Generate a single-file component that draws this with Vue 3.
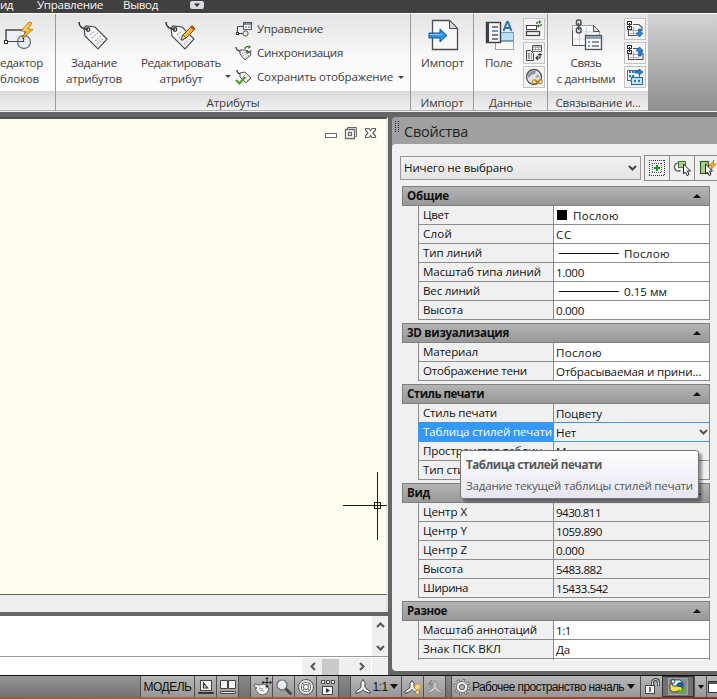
<script setup>
// Spreads a label over a given width by adjusting its letter spacing.
const vFit = {
  mounted(el, { value }) {
    if (!value) return
    const natural = el.getBoundingClientRect().width
    el.style.letterSpacing = (value - natural) / el.textContent.length + 'px'
  },
}

const sections = [
  {
    title: 'Общие', w: 42,
    rows: [
      { label: 'Цвет', lw: 26, value: 'Послою', vw: 46, swatch: true },
      { label: 'Слой', lw: 29, value: 'СС', vw: 16 },
      { label: 'Тип линий', lw: 59, value: 'Послою', vw: 46, line: true },
      { label: 'Масштаб типа линий', lw: 118, value: '1.000', vw: 28 },
      { label: 'Вес линий', lw: 57, value: '0.15 мм', vw: 43, line: true },
      { label: 'Высота', lw: 40, value: '0.000', vw: 28 },
    ],
  },
  {
    title: '3D визуализация', w: 102,
    rows: [
      { label: 'Материал', lw: 55, value: 'Послою', vw: 46 },
      { label: 'Отображение тени', lw: 104, value: 'Отбрасываемая и прини...', vw: 145 },
    ],
  },
  {
    title: 'Стиль печати', w: 77, muted: true,
    rows: [
      { label: 'Стиль печати', lw: 74, value: 'Поцвету', vw: 46 },
      { label: 'Таблица стилей печати', lw: 129, value: 'Нет', vw: 20, selected: true },
      { label: 'Пространство таблиц...', lw: 128, value: 'Модель', vw: 44 },
      { label: 'Тип стилей печати', lw: 104, value: '', vw: 0 },
    ],
  },
  {
    title: 'Вид', w: 23, muted: true,
    rows: [
      { label: 'Центр X', lw: 44, value: '9430.811', vw: 45 },
      { label: 'Центр Y', lw: 44, value: '1059.890', vw: 46 },
      { label: 'Центр Z', lw: 44, value: '0.000', vw: 28 },
      { label: 'Высота', lw: 40, value: '5483.882', vw: 46 },
      { label: 'Ширина', lw: 45, value: '15433.542', vw: 52 },
    ],
  },
  {
    title: 'Разное', w: 40,
    rows: [
      { label: 'Масштаб аннотаций', lw: 114, value: '1:1', vw: 15 },
      { label: 'Знак ПСК ВКЛ', lw: 78, value: 'Да', vw: 14 },
      { label: '', lw: 0, value: '', vw: 0 },
    ],
  },
]
</script>

<template>
  <div class="app">
    <nav class="menu">
      <span v-fit="13" class="m1">ид</span>
      <span v-fit="66" class="m2">Управление</span>
      <span v-fit="35" class="m3">Вывод</span>
      <svg class="m4" width="14" height="8" viewBox="0 0 14 8"><rect width="14" height="8" rx="2" fill="#d9d9de" /><path d="M4 2.500h6L7 6z" fill="#333" /></svg>
    </nav>

    <div class="ribbon">
      <section class="panel p-blocks">
        <div class="body">
          <div class="big editor">
            <svg width="34" height="32" viewBox="0 0 34 32">
              <path d="M6 22V11h19v10" fill="#edf1f6" stroke="#45484c" stroke-width="1.4" />
              <circle cx="24" cy="23" r="6.5" fill="#e4ebf3" fill-opacity=".85" stroke="#6b7178" stroke-width="1.3" />
              <path d="M6 22.500h17M23.500 23v-7" stroke="#45484c" stroke-width="1.2" />
              <rect x="4.500" y="21.500" width="3" height="3" fill="#fff" stroke="#333" />
              <path d="M29 3l-8 9 5 .5-4 7 11-9-5-.5 4-6z" fill="#ffb52d" stroke="#b8741a" stroke-width=".8" />
              <path d="M28 6l-4 5 4 .5" fill="none" stroke="#ffec9b" />
            </svg>
            <span v-fit="43">едактор</span>
            <span v-fit="39" class="l2">блоков</span>
          </div>
        </div>
        <div class="caption"></div>
      </section>

      <section class="panel p-attr">
        <div class="body">
          <div class="big define">
            <svg width="34" height="32" viewBox="0 0 34 32">
              <path d="M7 9l1 8 13 13 9-10L18 8 9 7z" fill="#f5f6f8" stroke="#4b4e53" stroke-width="1.2" />
              <path d="M13 16l5-4M15 19l6-5M18 22l6-5M20 25l6-5" stroke="#a4a8ad" stroke-width="1.1" stroke-dasharray="2 1" />
              <circle cx="11" cy="10.500" r="1.800" fill="#ddd" stroke="#333" stroke-width="1.2" />
              <path d="M2 3c0 5 4 7 9 7.500" fill="none" stroke="#333" stroke-width="1.5" />
            </svg>
            <span v-fit="46">Задание</span>
            <span v-fit="56" class="l2">атрибутов</span>
          </div>
          <div class="big edit">
            <svg width="34" height="32" viewBox="0 0 34 32">
              <path d="M7 9l1 8 13 13 9-10L18 8 9 7z" fill="#f5f6f8" stroke="#4b4e53" stroke-width="1.2" />
              <path d="M13 16l5-4M15 19l6-5M18 22l6-5M20 25l6-5" stroke="#a4a8ad" stroke-width="1.1" stroke-dasharray="2 1" />
              <circle cx="11" cy="10.500" r="1.800" fill="#ddd" stroke="#333" stroke-width="1.2" />
              <path d="M2 3c0 5 4 7 9 7.500" fill="none" stroke="#333" stroke-width="1.5" />
              <path d="M17 21l2-5L28 7l3 3-9 9z" fill="#ffb43a" stroke="#8a4d18" />
              <path d="M26 8l2-2 3 3-2 2z" fill="#b64e25" /><path d="M17 21l2-5 3 3z" fill="#f3ddb7" stroke="#444" stroke-width=".8" />
            </svg>
            <span v-fit="80">Редактировать</span>
            <span v-fit="43" class="l2">атрибут</span>
          </div>
          <i class="caret edit-caret"></i>
          <ul class="cmds">
            <li>
              <svg width="18" height="18" viewBox="0 0 18 18"><path d="M2.500 13V6.500h6M3 13.500h6" fill="none" stroke="#444" /><rect x="1.500" y="12.500" width="2" height="2" fill="#fff" stroke="#333" /><circle cx="10.500" cy="13.500" r="2.600" fill="#e5e8ec" stroke="#555" /><rect x="8.500" y="2.500" width="8" height="7" fill="#f4f6f8" stroke="#4e5761" /><path d="M9 4h7" stroke="#7b8da1" stroke-width="2" /><path d="M10 7h2m1 0h3" stroke="#666" /></svg>
              <span v-fit="66">Управление</span>
            </li>
            <li>
              <svg width="18" height="18" viewBox="0 0 18 18"><path d="M1 3c0 3 3 4 5 4" fill="none" stroke="#333" stroke-width="1.300" /><path d="M5 6v4l5 6 6-5-1-3-5-2z" fill="#f2f3f5" stroke="#555" /><path d="M7 10l5-3m-4 5l5-3m-3 5l4-3" stroke="#888" stroke-dasharray="1 1" /><path d="M10 5c0-2 2-3 4-2m2 3c0 3-2 3-4 2" fill="none" stroke="#3c7a24" stroke-width="1.200" /><path d="M13.500 1l2.500 2-2.500 2zM13 6v4l-2.500-2z" fill="#3c7a24" /></svg>
              <span v-fit="86">Синхронизация</span>
            </li>
            <li class="keep">
              <svg width="18" height="18" viewBox="0 0 18 18"><path d="M2 2c0 3 2 4 5 4" fill="none" stroke="#333" stroke-width="1.300" /><path d="M5 5v4l6 6 5-5-6-6z" fill="#f2f3f5" stroke="#555" /><path d="M8 9l3-3m-1 5l3-3m-1 5l3-3" stroke="#777" stroke-dasharray="1 1" /><path d="M1 12l3.500 3.500L10 9" fill="none" stroke="#4b9e25" stroke-width="2.200" /></svg>
              <span v-fit="136">Сохранить отображение</span><i class="caret"></i>
            </li>
          </ul>
        </div>
        <div class="caption"><span v-fit="53">Атрибуты</span></div>
      </section>

      <section class="panel p-import">
        <div class="body">
          <div class="big">
            <svg width="34" height="32" viewBox="0 0 34 32">
              <path d="M6.500 1.500h17l8 8v21h-25z" fill="#f7f8f9" stroke="#4a4d52" stroke-width="1.300" /><path d="M23.500 1.500v8h8z" fill="#d6dade" stroke="#4a4d52" />
              <path d="M3 14h11v-4l7 6.500-7 6.500v-4H3z" fill="#2d94ea" stroke="#1c5587" /><path d="M4 15.500h12" stroke="#8ccbff" />
            </svg>
            <span v-fit="43">Импорт</span>
          </div>
        </div>
        <div class="caption"><span v-fit="43">Импорт</span></div>
      </section>

      <section class="panel p-data">
        <div class="body">
          <div class="big field">
            <svg width="34" height="32" viewBox="0 0 34 32">
              <rect x="13.500" y="22.500" width="18" height="8" fill="#fafafa" stroke="#9a9fa5" /><rect x="16.500" y="13.500" width="15" height="8" fill="#b9e0f6" stroke="#6d9dba" />
              <rect x="4.500" y="3.500" width="14" height="20" fill="#f4f5f6" stroke="#3a3d42" stroke-width="1.400" /><rect x="4" y="3" width="3" height="21" fill="#3c4046" />
              <path d="M10 8h6M10 16h6M10 20h6" stroke="#555" stroke-width="1.500" /><path d="M10 12h6" stroke="#347fb8" stroke-width="1.500" />
              <path d="M21.500 12l3.500-9h1l3.500 9M22.500 9h6" fill="none" stroke="#2e74ad" stroke-width="2" />
            </svg>
            <span v-fit="27">Поле</span>
          </div>
          <div class="minis">
            <b><svg width="20" height="20" viewBox="0 0 20 20"><rect x="2.500" y="6.500" width="10" height="4" fill="#fff" stroke="#444" /><rect x="2.500" y="12.500" width="13" height="4" fill="#f5f5f5" stroke="#444" stroke-width="1.300" /><path d="M12.500 5c0-2 1.500-2 3-2m2 2c0 2-2 2-3 2" fill="none" stroke="#397c25" stroke-width="1.200" /><path d="M15 1l2.500 2L15 5zM15 5v4l-2.500-2z" fill="#397c25" /></svg></b>
            <b><svg width="20" height="20" viewBox="0 0 20 20"><path d="M8.500 2.500h9v6h-9z" fill="#fff" stroke="#555" /><path d="M8 4h10" stroke="#777" /><path d="M11.500 4v5M14.500 4v5M9 6.500h8" stroke="#aaa" /><path d="M2.500 7.500h4l3 3v7h-7z" fill="#ececec" stroke="#444" /><path d="M4 11h4M4 13h4M4 15h4" stroke="#555" stroke-width="1.200" stroke-dasharray="2 1" /><path d="M16 11v4h-4m2-2l-2 2 2 2M14 12l2-1 2 1" fill="none" stroke="#333" stroke-width="1.200" /></svg></b>
            <b><svg width="20" height="20" viewBox="0 0 20 20"><circle cx="10" cy="10" r="7.500" fill="#e2e6ea" stroke="#555" stroke-width="1.300" /><path d="M4 7c2-3 6-4 8-3l-1 3-4 1-2 3-1-1z" fill="#8e979f" /><path d="M11 10l3-3 2 3-3 1z" fill="#a5adb5" /><rect x="8.500" y="13" width="4" height="3.500" rx="1.500" fill="#fff" stroke="#c78722" stroke-width="1.300" /><rect x="14" y="13" width="4" height="3.500" rx="1.500" fill="#fff" stroke="#c78722" stroke-width="1.300" /><path d="M11 14.800h5" stroke="#a8640c" /></svg></b>
          </div>
        </div>
        <div class="caption"><span v-fit="43">Данные</span></div>
      </section>

      <section class="panel p-link">
        <div class="body">
          <div class="big link">
            <svg width="34" height="32" viewBox="0 0 34 32">
              <path d="M3.500 6.500h21l6 6v14h-27z" fill="#f8f9fa" stroke="#9ca1a7" /><path d="M3 13h27M3 20h27M10.500 8v18M17.500 8v18" stroke="#d0d4d8" /><path d="M24.500 6.500v6h6z" fill="#ddd" stroke="#555" /><path d="M3.500 12v14.500h13" fill="none" stroke="#555" />
              <rect x="7.500" y="1" width="4.500" height="5.500" rx="2" fill="none" stroke="#4b5057" stroke-width="1.500" /><rect x="7.500" y="8.500" width="4.500" height="5.500" rx="2" fill="none" stroke="#4b5057" stroke-width="1.500" /><path d="M9.700 4v7" stroke="#4b5057" stroke-width="1.500" />
              <rect x="16.500" y="16.500" width="16" height="14" fill="#f3f5f7" stroke="#4c545d" stroke-width="1.300" /><path d="M17 18.500h15" stroke="#7e93a8" stroke-width="2.500" /><path d="M19 23h2m2 0h7M19 27h2m2 0h7" stroke="#667989" stroke-width="1.300" />
            </svg>
            <span v-fit="31">Связь</span>
            <span v-fit="59" class="l2">с данными</span>
          </div>
          <div class="minis">
            <b v-for="k in 2" :key="k"><svg width="20" height="20" viewBox="0 0 20 20"><path d="M3.500 10v6.500h9M8 5.500h6l3 3V12" fill="#fff" stroke="#555" stroke-width="1.200" /><path d="M5 11.500h10M5 14.500h9M8.500 8v8" stroke="#a5abb1" /><rect x="2.500" y="2.500" width="4" height="3" fill="none" stroke="#333" /><rect x="2.500" y="7.500" width="4" height="3" fill="none" stroke="#333" /><path d="M4.500 4v5" stroke="#333" /><path v-if="k === 1" d="M13.500 10h2.500v4h2l-3.500 4L11 14h2.500z" fill="#2385e2" stroke="#14599f" stroke-width=".8" /><path v-else d="M13.500 13H16V8h2l-3.500-4L11 8h2.500z" fill="#2385e2" stroke="#14599f" stroke-width=".8" /><path v-if="k === 2" d="M12 16.500h6V10" fill="none" stroke="#444" /></svg></b>
            <b><svg width="20" height="20" viewBox="0 0 20 20"><rect x="2.500" y="3.500" width="12" height="10" fill="#f1f6fa" stroke="#50708c" /><path d="M4 5h5M4 9h2m1 0h2" stroke="#2279c9" stroke-width="2" stroke-dasharray="2 1" /><path d="M10 4h4V2l4 3-4 3V6h-4z" fill="#2385e2" stroke="#14599f" stroke-width=".8" /><rect x="6.500" y="10.500" width="11" height="7" fill="#d8ecfb" stroke="#2a6da9" stroke-width="1.200" /><path d="M9 14h2m2 0h2" stroke="#2279c9" stroke-width="2.500" /></svg></b>
          </div>
        </div>
        <div class="caption"><span v-fit="85">Связывание и...</span></div>
      </section>
      <div class="rest"></div>
    </div>

    <main class="work">
      <div class="left">
        <div class="canvas">
          <svg class="winbtns" width="54" height="14" viewBox="0 0 54 14">
            <rect x="1.500" y="7.500" width="11" height="4" fill="#fff" stroke="#6b6b6b" />
            <path d="M23.500 1.500h9v9h-9z" fill="#eee" stroke="#6b6b6b" /><path d="M21.500 3.500h9v9h-9z" fill="#fff" stroke="#6b6b6b" stroke-width="1.300" /><rect x="24.500" y="6.500" width="3" height="3" fill="#fff" stroke="#6b6b6b" stroke-width="1.300" />
            <path d="M41.500 2.500h3.500l1.500 2 1.500-2h3.500v1.500l-2.500 3 2.500 3v1.500H48l-1.500-2-1.500 2h-3.500V10L44 7l-2.500-3z" fill="#fff" stroke="#606060" stroke-width="1.200" />
          </svg>
          <svg class="cross" width="44" height="68" viewBox="0 0 44 68"><path d="M0 33.500h44M34.500 0v68" stroke="#1c1c14" /><rect x="31.500" y="30.500" width="6" height="6" fill="#fffdf0" stroke="#1c1c14" /><path d="M31 33.500h7M34.500 30v7" stroke="#1c1c14" /></svg>
        </div>
        <div class="strip"></div>
        <div class="cmdline">
          <div class="text"></div>
          <div class="vscroll">
            <svg width="9" height="6" viewBox="0 0 9 6"><path d="M1 5l3.500-3.500L8 5" fill="none" stroke="#555" stroke-width="2" /></svg>
            <svg width="9" height="6" viewBox="0 0 9 6"><path d="M1 1l3.500 3.500L8 1" fill="none" stroke="#555" stroke-width="2" /></svg>
          </div>
        </div>
        <div class="inputrow">
          <div class="hscroll">
            <svg width="6" height="9" viewBox="0 0 6 9"><path d="M5 1L1.500 4.500 5 8" fill="none" stroke="#555" stroke-width="2" /></svg>
            <i class="thumb"></i>
            <svg width="6" height="9" viewBox="0 0 6 9"><path d="M1 1l3.500 3.500L1 8" fill="none" stroke="#555" stroke-width="2" /></svg>
          </div>
          <div class="corner"></div>
        </div>
      </div>

      <aside class="props">
        <header class="ptitle">
          <svg class="grip" width="4" height="12" viewBox="0 0 4 12"><path d="M.5 0v12M3.500 0v12" stroke="#222" stroke-dasharray="1 1" /></svg>
          <span v-fit="64">Свойства</span>
        </header>
        <div class="pbody">
          <div class="select-row">
            <div class="combo">
              <span v-fit="109">Ничего не выбрано</span>
              <svg width="9" height="7" viewBox="0 0 9 7"><path d="M1 1l3.500 3.500L8 1" fill="none" stroke="#444" stroke-width="2" /></svg>
            </div>
            <div class="pbtns">
              <b><svg width="18" height="18" viewBox="0 0 18 18"><path d="M1 1.500h16M1 16.500h16M1.500 1v16M16.500 1v16" fill="none" stroke="#333" stroke-dasharray="1 1" /><path d="M4 4.500h10M4 13.500h10M4.500 4v10M13.500 4v10" fill="none" stroke="#555" stroke-dasharray="1 1" /><path d="M9 6v6M6 9h6" stroke="#119a13" stroke-width="2" /></svg></b>
              <b><svg width="18" height="18" viewBox="0 0 18 18"><path d="M5 4C2 4.500 1 7 1.500 9s3 4 6 2.500" fill="none" stroke="#666" stroke-width="1.400" /><rect x="5.500" y="2.500" width="7" height="6" fill="#a9d18c" stroke="#4a7b33" /><path d="M10.500 5v10l2-2 1.500 3.500 2-1-1.500-3.500h3z" fill="#fff" stroke="#222" /></svg></b>
              <b><svg width="18" height="18" viewBox="0 0 18 18"><rect x="2.500" y="2.500" width="8" height="12" fill="#a9d18c" stroke="#375f29" stroke-width="1.200" /><path d="M16 1l-5 6h3l-2 5 6-7h-3z" fill="#ffb02c" stroke="#c27a15" stroke-width=".8" /><path d="M7.500 5v10l2-2 1.500 3.500 2-1-1.500-3.500h3z" fill="#fff" stroke="#222" /></svg></b>
            </div>
          </div>
          <div class="groups">
            <section v-for="s in sections" :key="s.title" class="group" :class="{ muted: s.muted }">
              <h3><span v-fit="s.w">{{ s.title }}</span><i class="up"></i></h3>
              <div v-for="(r, i) in s.rows" :key="i" class="row" :class="{ selected: r.selected }">
                <div class="label"><span v-fit="r.lw">{{ r.label }}</span></div>
                <div class="value">
                  <i v-if="r.swatch" class="swatch"></i>
                  <i v-if="r.line" class="line"></i>
                  <span v-fit="r.vw">{{ r.value }}</span>
                  <svg v-if="r.selected" class="drop" width="9" height="7" viewBox="0 0 9 7"><path d="M1 1l3.500 3.500L8 1" fill="none" stroke="#555" stroke-width="2" /></svg>
                </div>
              </div>
            </section>
          </div>
          <div class="tooltip">
            <strong v-fit="136">Таблица стилей печати</strong>
            <span v-fit="227">Задание текущей таблицы стилей печати</span>
          </div>
        </div>
      </aside>
    </main>

    <footer class="status">
      <div class="cell s0"></div>
      <div class="cell lit s1"><span v-fit="48">МОДЕЛЬ</span></div>
      <div class="cell lit w22"><svg width="18" height="18" viewBox="0 0 18 18"><rect x="3.500" y="2.500" width="11" height="10" fill="#f4f4f4" stroke="#444" /><path d="M6.500 5v5h4z" fill="none" stroke="#333" stroke-width="1.200" /><path d="M1.500 14.500h15v1h-15z" fill="#eee" stroke="#333" /></svg></div>
      <div class="cell lit w23"><svg width="18" height="18" viewBox="0 0 18 18"><path d="M1.500 2.500h7v8h-7zM9.500 2.500h7v8h-7z" fill="#f4f4f4" stroke="#444" /><path d="M1.500 13.500h15v2h-15z" fill="#eee" stroke="#444" /></svg></div>
      <div class="cell gap11"></div>
      <div class="cell lit w22"><svg width="20" height="20" viewBox="0 0 20 20"><path d="M3 7l4 1 5-1 3 2 2 3-2 4-4 2-4-1-4-5 2-1-3-2z" fill="#efefef" stroke="#666" /><path d="M7 11l4 1m-3 1l4 1" stroke="#999" /><path d="M15 1.500v8M11 5.500h8" stroke="#222" /><path d="M15 0l1.800 2h-3.600zM15 11l1.800-2h-3.600zM9.500 5.500l2-1.800v3.600zM20 5.500l-2-1.800v3.600z" fill="#222" /></svg></div>
      <div class="cell lit w22"><svg width="18" height="18" viewBox="0 0 18 18"><path d="M10.500 10.500l5 5" stroke="#444" stroke-width="3" stroke-linecap="round" /><circle cx="7" cy="7" r="5" fill="#e3edf3" stroke="#666" stroke-width="1.200" /><path d="M4 6c1-2 3-3 5-2" fill="none" stroke="#fff" stroke-width="1.500" /></svg></div>
      <div class="cell lit w22"><svg width="18" height="18" viewBox="0 0 18 18"><circle cx="9" cy="9" r="7.500" fill="#ededed" stroke="#555" /><path d="M5 5l2.500 2.500m3 3L13 13M13 5l-2.500 2.500m-3 3L5 13" stroke="#666" /><rect x="4.500" y="4.500" width="9" height="9" rx="3" fill="none" stroke="#777" /><circle cx="9" cy="9" r="2.500" fill="#fff" stroke="#666" /></svg></div>
      <div class="cell lit w23"><svg width="18" height="18" viewBox="0 0 18 18"><path d="M2.500 2.500h3v3h-3zM7.500 2.500h3v3h-3zM12.500 2.500h3v3h-3z" fill="#fff" stroke="#444" /><rect x="3.500" y="8.500" width="10" height="8" fill="#f2f2f2" stroke="#444" /><path d="M7 10l4 2.500L7 15z" fill="#333" /></svg></div>
      <div class="cell gap11"></div>
      <div class="cell lit scale"><svg width="16" height="17" viewBox="0 0 16 17"><path d="M8 1.500l2 3v5l5 4v2l-5-2-2-2-2 2-5 2v-2l5-4v-5z" fill="#f7f7f7" stroke="#444" /></svg><span v-fit="15">1:1</span><i class="dn"></i></div>
      <div class="cell lit w22"><svg width="18" height="18" viewBox="0 0 18 18"><path d="M8 2.500l2 3v4l5 4v2l-5-2-2-2-2 2-5 2v-2l5-4v-4z" fill="#f7f7f7" stroke="#444" /><circle cx="13.500" cy="9" r="2.800" fill="#ffe08a" stroke="#f39b12" /><rect x="12" y="12.500" width="3" height="3.500" fill="#fff2b9" stroke="#b38531" stroke-width=".7" /></svg></div>
      <div class="cell lit w22"><svg width="18" height="18" viewBox="0 0 18 18"><path d="M9 2.500l2 3v4l5 4v2l-5-2-2-2-2 2-5 2v-2l5-4v-4z" fill="#c6c6c6" stroke="#8a8a8a" /><path d="M6 2L3 6h3l-2 4" fill="none" stroke="#888" stroke-width="1.500" /></svg></div>
      <div class="cell gap6"></div>
      <div class="cell lit wspace"><svg width="18" height="18" viewBox="0 0 18 18"><circle cx="9" cy="9" r="7" fill="none" stroke="#555" stroke-width="2.600" stroke-dasharray="2.750 2.750" /><circle cx="9" cy="9" r="6.900" fill="none" stroke="#f2f2f2" stroke-width="1.400" stroke-dasharray="1.600 3.820" stroke-dashoffset="-.5" /><circle cx="9" cy="9" r="5.600" fill="#f4f4f4" stroke="#666" stroke-width=".8" /><circle cx="9" cy="9" r="2.600" fill="#b4b4b4" stroke="#555" /></svg><span v-fit="152">Рабочее пространство началь</span><i class="dn"></i></div>
      <div class="cell lit w22"><svg width="18" height="18" viewBox="0 0 18 18"><path d="M9.500 9V4.500c0-4 6-4 6 0V8" fill="none" stroke="#444" stroke-width="2.800" /><path d="M9.500 9V4.500c0-4 6-4 6 0V7.500" fill="none" stroke="#eee" stroke-width="1" /><rect x="2.500" y="7.500" width="9" height="8" fill="#f3f3f3" stroke="#444" /><path d="M7 9v5" stroke="#444" stroke-width="1.500" /></svg></div>
      <div class="cell hw"><svg width="22" height="19" viewBox="0 0 22 19"><rect x="1.500" y="1.500" width="19" height="16" fill="#8a8a8a" stroke="#a4a4a4" /><path d="M3 7h12v7l-9 1-3-2z" fill="#ffdf3c" stroke="#333" stroke-width=".8" /><path d="M4 3h9l2 2v4H6z" fill="#f5f9fc" stroke="#234f72" /><path d="M9 9c1-4 4-5 8-3l-1 5z" fill="#265f8e" /><circle cx="6" cy="4.500" r="1.800" fill="#fff" stroke="#245" /><path d="M11 13l3 3 5-6" fill="none" stroke="#45b921" stroke-width="2" /></svg></div>
      <div class="cell lit w12"><i class="dn"></i></div>
      <div class="cell lit last"><svg width="10" height="14" viewBox="0 0 10 14"><rect x="1.500" y="1.500" width="14" height="11" fill="#fff" stroke="#333" /><path d="M2 3h12" stroke="#555" stroke-width="2" /></svg></div>
    </footer>
    <div class="desktop"></div>
  </div>
</template>

<style>
body { margin: 0; overflow: hidden; }
</style>

<style scoped>
* { box-sizing: border-box; }
.app { width: 717px; height: 699px; overflow: hidden; display: flex; flex-direction: column; background: #666; font: 11.6px/16px "Open Sans", "Noto Sans", sans-serif; color: #404040; }
span, strong { white-space: nowrap; display: inline-block; flex: none; }
svg { display: block; flex: none; }
i { display: block; flex: none; }

.menu { height: 13px; flex: none; display: flex; background: #404040; color: #f5f5f5; line-height: 14px; font-weight: 500; }
.menu span { margin-top: -2px; }
.m2 { margin-left: 24px; }
.m3 { margin-left: 20px; }
.m4 { margin: 1px 0 0 32px; }

.ribbon { height: 99px; flex: none; display: flex; border-top: 1px solid #fff; border-bottom: 1px solid #f0f0f0; }
.panel { display: flex; flex-direction: column; border-right: 1px solid #9a9a9a; overflow: hidden; flex: none; }
.p-blocks { width: 56px; }
.p-attr { width: 355px; }
.p-import { width: 63px; }
.p-data { width: 74px; }
.p-link { width: 100px; border-right: 0; }
.body { height: 78px; flex: none; display: flex; background: linear-gradient(#e4e4e4, #fafafa 60%, #fdfdfd); border-bottom: 1px solid #d4d4d4; }
.caption { flex: 1; background: linear-gradient(#dcdcdc, #f0f0f0); text-align: center; line-height: 21px; height: 19px; border-bottom: 1px solid #b4b4b4; }
.rest { flex: 1; background: linear-gradient(#d4d4d4, #8f8f8f); }
.big { display: flex; flex-direction: column; align-items: center; padding-top: 5px; flex: none; }
.big span { margin-top: 4px; }
.big .l2 { margin-top: 0; }
.editor { width: 55px; align-items: flex-start; }
.define { width: 76px; }
.edit { width: 98px; }
.edit-caret { margin: 61px 0 0 -5px; }
.caret { border: 3px solid transparent; border-top: 3px solid #444; border-bottom: 0; width: 0; height: 0; }
.p-import .big { width: 63px; }
.cmds { list-style: none; margin: 0; padding: 3px 0 0 4px; }
.cmds li { display: flex; align-items: center; height: 24px; gap: 4px; }
.cmds .caret { margin-left: 1px; }
.field { width: 49px; }
.link { width: 76px; }
.minis { display: flex; flex-direction: column; gap: 2px; padding-top: 4px; }
.minis b { width: 22px; height: 22px; border: 1px solid #c4c4c4; background: #f5f5f5; }

.work { height: 563px; flex: none; display: flex; background: #666; padding-top: 5px; }
.left { width: 388px; display: flex; flex-direction: column; flex: none; }
.canvas { position: relative; height: 478px; flex: none; background: #fffdf0; border-top: 2px solid #505050; border-right: 2px solid #ececec; border-bottom: 1px solid #606060; }
.winbtns { position: absolute; left: 324px; top: 7px; }
.cross { position: absolute; left: 343px; top: 353px; }
.strip { height: 17px; flex: none; background: #efefef; border-right: 2px solid #e0e0e0; margin-bottom: 4px; }
.cmdline { height: 41px; flex: none; display: flex; border-bottom: 1px solid #999; background: #fff; }
.text { flex: 1; }
.vscroll { width: 16px; background: #efefef; display: flex; flex-direction: column; align-items: center; justify-content: space-between; padding: 6px 0 5px; }
.inputrow { height: 18px; flex: none; display: flex; justify-content: flex-end; background: #fff; }
.hscroll { width: 69px; background: #efefef; margin-top: 1px; display: flex; align-items: center; justify-content: space-between; padding: 0 6px 0 8px; }
.thumb { width: 17px; height: 16px; background: #cacaca; margin: 0 14px 0 0; }
.corner { width: 16px; background: #efefef; margin: 1px 0 0 1px; }

.props { flex: 1; margin: 0 0 4px 4px; display: flex; flex-direction: column; overflow: hidden; color: #111; border-radius: 4px 0 0 4px; background: #a0a0a0; min-width: 0; }
.ptitle { height: 27px; flex: none; display: flex; align-items: center; font-size: 14.5px; line-height: 20px; color: #222; padding: 2px 0 0 3px; }
.grip { margin: -10px 5px 0 0; }
.pbody { position: relative; flex: 1; background: #f0f0f0; border-radius: 4px 0 0 4px; padding: 11px 0 0 8px; overflow: hidden; }
.select-row { display: flex; gap: 3px; }
.combo { width: 241px; height: 24px; margin-top: 1px; flex: none; display: flex; align-items: center; justify-content: space-between; padding: 0 3px; border: 1px solid #999; background: linear-gradient(#f2f2f2, #e4e4e4); }
.pbtns { display: flex; flex: none; }
.pbtns b { width: 26px; height: 26px; border: 1px solid #8a8a8a; margin-right: -1px; padding: 3px; background: #f0f0f0; }
.groups { height: 474px; margin: 5px 0 0 2px; width: 308px; overflow: hidden; }
.group { margin-bottom: 3px; }
h3 { margin: 0; height: 20px; border: 1px solid #808080; background: linear-gradient(#b4b4b4, #989898); font-size: 11.6px; font-weight: 700; display: flex; align-items: center; justify-content: space-between; padding: 0 8px 0 4px; }
.up { border: 4px solid transparent; border-bottom: 4px solid #111; border-top: 0; }
.row { display: flex; height: 19px; margin-left: 16px; border: 1px solid #8c8c8c; border-top: 0; line-height: 17px; }
.label { width: 135px; flex: none; padding-left: 4px; border-right: 1px solid #8c8c8c; overflow: hidden; }
.value { flex: 1; display: flex; padding-left: 2px; background: #fff; align-items: center; overflow: hidden; }
.muted .value { background: #f0f0f0; }
.swatch { width: 10px; height: 10px; background: #000; margin: 0 6px 0 1px; }
.line { width: 60px; height: 1px; background: #111; margin: 0 5px 0 3px; }
.row.selected { border-color: #3c96ee; box-shadow: 0 -1px #3c96ee; }
.selected .label { background: #3399ff; color: #fff; border-color: #3399ff; }
.drop { margin: 0 1px 0 auto; }
.tooltip { position: absolute; left: 68px; top: 306px; width: 239px; height: 49px; border: 1px solid #767676; border-radius: 3px; background: linear-gradient(#fff, #e4e5f0); box-shadow: 3px 3px 3px rgba(0, 0, 0, .4); color: #575757; padding: 6px 5px; display: flex; flex-direction: column; gap: 5px; align-items: flex-start; }

.status { height: 22px; flex: none; display: flex; border-top: 1px solid #111; background: linear-gradient(#8a8a8a, #707070); color: #111; font-family: "Liberation Sans", Arial, sans-serif; font-size: 12px; }
.cell { display: flex; align-items: center; justify-content: center; flex: none; overflow: hidden; }
.lit { background: linear-gradient(#b8b8b8, #979797); border-left: 1px solid #4e4e4e; }
.s0 { width: 140px; background: linear-gradient(#959595, #737373); }
.s1 { width: 54px; }
.w22 { width: 22px; }
.w23 { width: 23px; border-right: 1px solid #4e4e4e; }
.gap11 { width: 11px; }
.gap6 { width: 6px; border-left: 1px solid #4e4e4e; }
.scale { width: 51px; gap: 2px; }
.dn { border: 4px solid transparent; border-top: 5px solid #111; border-bottom: 0; }
.wspace { width: 189px; gap: 1px; justify-content: flex-start; padding-left: 1px; }
.wspace .dn { margin-left: 2px; }
.hw { width: 32px; background: #707070; border: 1px solid #333; }
.w12 { width: 12px; }
.w12 .dn { border-width: 4px 3px 0; }
.last { flex: 1; }
.desktop { flex: 1; background: linear-gradient(90deg, #a65340, #b26046 30%, #94462f 55%, #a8523b 65%, #7c3a2b); }
</style>
